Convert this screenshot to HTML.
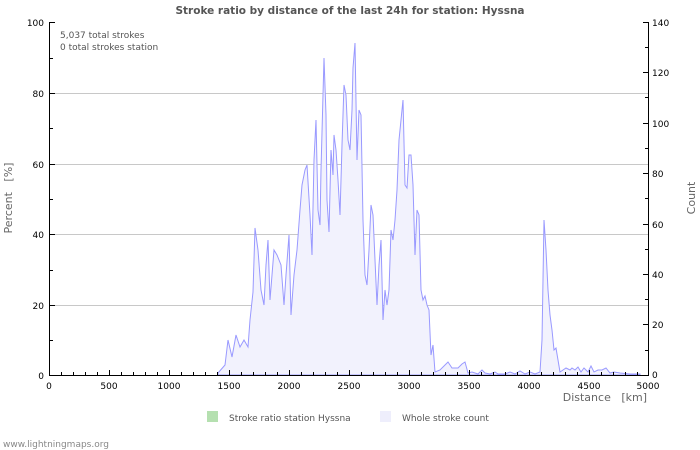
<!DOCTYPE html>
<html><head><meta charset="utf-8"><style>
body{margin:0;background:#fff;}
svg{display:block;font-family:"DejaVu Sans","Liberation Sans",sans-serif;}
</style></head><body>
<svg width="700" height="450" viewBox="0 0 700 450">
<text x="350" y="14" text-anchor="middle" font-size="10.5" font-weight="bold" fill="#555">Stroke ratio by distance of the last 24h for station: Hyssna</text>
<g stroke="#c8c8c8" stroke-width="1">
<line x1="49" y1="93.5" x2="648" y2="93.5"/><line x1="49" y1="164.5" x2="648" y2="164.5"/>
<line x1="49" y1="234.5" x2="648" y2="234.5"/><line x1="49" y1="305.5" x2="648" y2="305.5"/>
</g>
<polygon fill="#f2f2fd" stroke="#9999ff" stroke-width="1" points="218,375 218,373 225,365 228,340 232,357 236,335 240,347 244,340 248,347 250,320 253,292 255,228 258,250 261,290 264,305 266,265 268,240 270,300 272,275 274,250 277,255 281,265 284,305 286,275 289,235 291,315 294,275 297,250 300,210 302,185 305,170 307,165 310,215 312,255 314,160 316,120 318,210 320,225 321,170 323,95 324,58 326,115 327,200 329,232 331,150 333,175 334,135 336,150 338,180 340,215 342,145 344,85 346,95 348,140 350,150 352,110 353,68 355,43 357,160 359,110 361,115 363,220 365,275 367,285 369,250 371,205 373,215 375,260 377,305 379,265 381,240 383,320 385,290 387,305 389,290 391,230 393,240 395,220 397,190 399,140 403,100 405,185 407,188 409,155 411,155 413,185 415,255 417,210 419,215 421,290 423,300 425,296 427,305 429,310 431,355 433,345 435,372 440,370 445,365 448,362 452,368 458,368 462,364 465,362 468,373 472,372 478,374 482,370 485,373 490,374 495,372 498,374 505,374 510,372 515,374 520,371 525,374 530,372 535,374 540,372 542,340 543,280 544,220 546,250 548,290 550,315 552,330 554,350 556,348 558,360 560,372 563,370 566,368 570,370 572,368 575,370 578,367 581,372 584,368 588,372 591,366 594,372 598,370 602,370 606,368 610,373 614,372 620,373 630,374 640,374 640,375"/>
<g stroke="#000" stroke-width="1">
<line x1="49.5" y1="22" x2="49.5" y2="376"/>
<line x1="648.5" y1="22" x2="648.5" y2="376"/>
<line x1="49" y1="375.5" x2="649" y2="375.5"/>
<line x1="50" y1="22.5" x2="55" y2="22.5"/><line x1="50" y1="93.5" x2="55" y2="93.5"/><line x1="50" y1="164.5" x2="55" y2="164.5"/><line x1="50" y1="234.5" x2="55" y2="234.5"/><line x1="50" y1="305.5" x2="55" y2="305.5"/>
<line x1="50" y1="58.5" x2="53" y2="58.5"/><line x1="50" y1="128.5" x2="53" y2="128.5"/><line x1="50" y1="199.5" x2="53" y2="199.5"/><line x1="50" y1="270.5" x2="53" y2="270.5"/><line x1="50" y1="340.5" x2="53" y2="340.5"/>
<line x1="643" y1="324.5" x2="648" y2="324.5"/><line x1="643" y1="274.5" x2="648" y2="274.5"/><line x1="643" y1="224.5" x2="648" y2="224.5"/><line x1="643" y1="173.5" x2="648" y2="173.5"/><line x1="643" y1="123.5" x2="648" y2="123.5"/><line x1="643" y1="72.5" x2="648" y2="72.5"/><line x1="643" y1="22.5" x2="648" y2="22.5"/>
<line x1="645" y1="350.5" x2="648" y2="350.5"/><line x1="645" y1="299.5" x2="648" y2="299.5"/><line x1="645" y1="249.5" x2="648" y2="249.5"/><line x1="645" y1="198.5" x2="648" y2="198.5"/><line x1="645" y1="148.5" x2="648" y2="148.5"/><line x1="645" y1="97.5" x2="648" y2="97.5"/><line x1="645" y1="47.5" x2="648" y2="47.5"/>
</g>
<path stroke="#000" stroke-width="1" fill="none" d="M61.5 372V375M73.5 372V375M85.5 372V375M97.5 372V375M109.5 370V375M121.5 372V375M133.5 372V375M145.5 372V375M157.5 372V375M169.5 370V375M181.5 372V375M193.5 372V375M205.5 372V375M217.5 372V375M229.5 370V375M241.5 372V375M253.5 372V375M265.5 372V375M277.5 372V375M289.5 370V375M301.5 372V375M313.5 372V375M325.5 372V375M337.5 372V375M349.5 370V375M361.5 372V375M373.5 372V375M385.5 372V375M397.5 372V375M409.5 370V375M421.5 372V375M433.5 372V375M445.5 372V375M457.5 372V375M469.5 370V375M481.5 372V375M493.5 372V375M505.5 372V375M517.5 372V375M529.5 370V375M541.5 372V375M553.5 372V375M565.5 372V375M577.5 372V375M589.5 370V375M601.5 372V375M613.5 372V375M625.5 372V375M637.5 372V375"/>
<g font-size="9" fill="#000" text-anchor="end">
<text x="44" y="26">100</text><text x="44" y="97">80</text><text x="44" y="168">60</text><text x="44" y="238">40</text><text x="44" y="309">20</text><text x="44" y="379">0</text>
</g>
<g font-size="9" fill="#000" text-anchor="start">
<text x="652" y="378">0</text><text x="652" y="328">20</text><text x="652" y="278">40</text><text x="652" y="228">60</text><text x="652" y="177">80</text><text x="652" y="127">100</text><text x="652" y="76">120</text><text x="652" y="26">140</text>
</g>
<g font-size="9" fill="#000" text-anchor="middle">
<text x="49" y="389">0</text><text x="109" y="389">500</text><text x="169" y="389">1000</text><text x="229" y="389">1500</text><text x="289" y="389">2000</text><text x="349" y="389">2500</text><text x="409" y="389">3000</text><text x="469" y="389">3500</text><text x="529" y="389">4000</text><text x="589" y="389">4500</text><text x="648" y="389">5000</text>
</g>
<text x="647" y="401" text-anchor="end" font-size="11" fill="#666" xml:space="preserve">Distance   [km]</text>
<text transform="translate(12,198) rotate(-90)" text-anchor="middle" font-size="11" fill="#666" xml:space="preserve">Percent   [%]</text>
<text transform="translate(695,198) rotate(-90)" text-anchor="middle" font-size="11" fill="#666">Count</text>
<text x="60" y="38" font-size="9" fill="#555">5,037 total strokes</text>
<text x="60" y="50" font-size="9" fill="#555">0 total strokes station</text>
<rect x="207" y="411" width="11" height="11" fill="#b5e0b0"/>
<text x="229" y="421" font-size="9" fill="#555">Stroke ratio station Hyssna</text>
<rect x="380" y="411" width="11" height="11" fill="#eeeefc"/>
<text x="402" y="421" font-size="9" fill="#555">Whole stroke count</text>
<text x="3" y="447" font-size="9" fill="#888">www.lightningmaps.org</text>
</svg>
</body></html>
